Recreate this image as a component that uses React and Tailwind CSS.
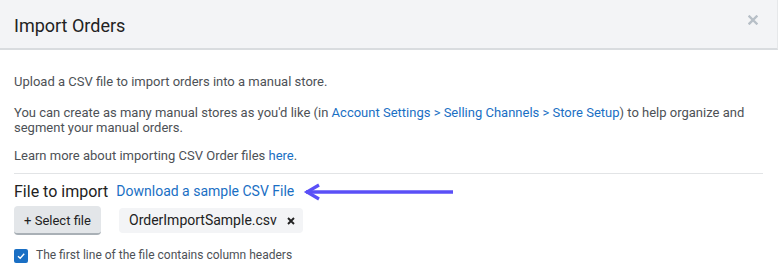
import React from "react";

export default function App() {
  return (
    <div className="w-[778px] h-[268px] bg-white overflow-hidden" style={{ fontFamily: "Roboto, 'Liberation Sans', sans-serif" }}>
      <div className="h-[50px] bg-[#f3f4f6] border-b-2 border-[#d9dcdf] border-r border-r-[#e6e8ea] flex items-center justify-between pl-[14px] pr-[19px]">
        <h1 className="text-[18px] text-[#222] leading-none pt-[3px]">Import Orders</h1>
        <svg width="10" height="10" viewBox="0 0 10 10" className="mb-[8px]">
          <path d="M1.5 1.5 L8.5 8.5 M8.5 1.5 L1.5 8.5" stroke="#b7bfc7" strokeWidth="2.4" strokeLinecap="square" />
        </svg>
      </div>
      <div className="px-[14px] pr-[15px] pt-[24px] text-[13px] leading-[15px] text-[#4d5156]">
        <p>Upload a CSV file to import orders into a manual store.</p>
        <p className="mt-[16px]">
          You can create as many manual stores as you'd like (in{" "}
          <span className="text-[#1a6fc4]">Account Settings &gt; Selling Channels &gt; Store Setup</span>) to help organize and
          <br />
          segment your manual orders.
        </p>
        <p className="mt-[13px]">
          Learn more about importing CSV Order files <span className="text-[#1a6fc4]">here</span>.
        </p>
        <div className="mt-[10px] border-t border-[#e2e4e6]" />
        <div className="flex items-center mt-[6px] h-[22px]">
          <span className="text-[16px] text-[#222]">File to import</span>
          <span className="ml-[8px] text-[14px] text-[#1a6fc4]">Download a sample CSV File</span>
          <svg width="152" height="18" viewBox="0 0 152 18" className="ml-[9px] mt-[1px]">
            <path d="M3 9 H150" stroke="#5a4ff7" strokeWidth="3.6" />
            <path d="M16 2 L4 9 L16 16" stroke="#5a4ff7" strokeWidth="3.2" fill="none" strokeLinejoin="miter" />
          </svg>
        </div>
        <div className="flex items-center mt-[4px]">
          <button className="w-[87px] h-[29px] rounded-[4px] bg-[#e3e6e9] border-b-2 border-[#a9b0b6] text-[13px] text-[#222] flex items-center justify-center pt-[1px]">
            + Select file
          </button>
          <div className="ml-[18px] h-[25px] w-[184px] rounded-[4px] bg-[#f3f4f6] flex items-center pl-[10px] text-[14px] text-[#222]">
            <span>OrderImportSample.csv</span>
            <svg width="8" height="8" viewBox="0 0 8 8" className="ml-[10px]">
              <path d="M1 1 L7 7 M7 1 L1 7" stroke="#222" strokeWidth="1.9" />
            </svg>
          </div>
        </div>
        <div className="flex items-center mt-[13px]">
          <div className="w-[14px] h-[14px] rounded-[2px] bg-[#1a6fc4] flex items-center justify-center">
            <svg width="10" height="10" viewBox="0 0 10 10">
              <path d="M2 5.2 L4.2 7.3 L8.2 2.8" stroke="white" strokeWidth="1.4" fill="none" />
            </svg>
          </div>
          <span className="ml-[8px] text-[12px] text-[#4d5156]">The first line of the file contains column headers</span>
        </div>
      </div>
    </div>
  );
}
